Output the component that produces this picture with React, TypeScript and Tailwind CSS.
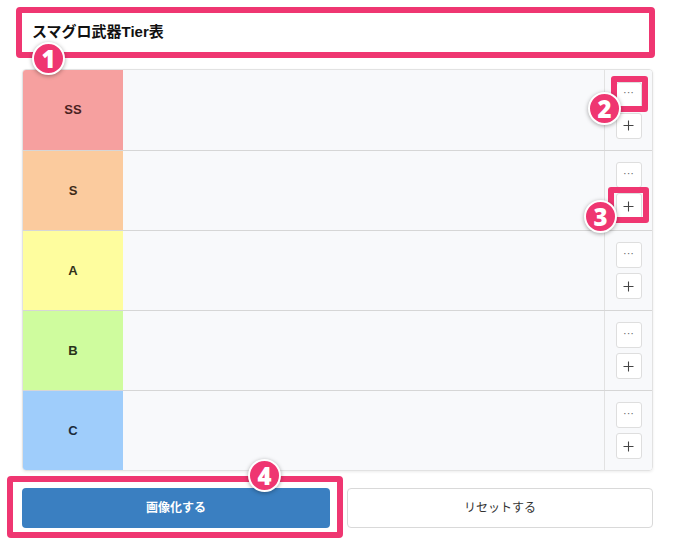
import React from "react";

const tiers = [
  { label: "SS", bg: "bg-[#f6a09f]", text: "text-[#4a2222]" },
  { label: "S", bg: "bg-[#fbcb9e]", text: "text-[#3e2a18]" },
  { label: "A", bg: "bg-[#fefd9e]", text: "text-[#33331a]" },
  { label: "B", bg: "bg-[#cffc9e]", text: "text-[#28331a]" },
  { label: "C", bg: "bg-[#9fcdfb]", text: "text-[#1a2a3a]" },
];

function Badge({ n, className }: { n: string; className: string }) {
  return (
    <div
      className={
        "absolute w-[33px] h-[33px] rounded-full bg-[#ef3671] border-[2.5px] border-white shadow-[0_1px_4px_rgba(0,0,0,0.35)] flex items-center justify-center text-white text-[24px] font-black leading-none " +
        className
      }
      style={{ fontFamily: '"Open Sans", "Liberation Sans", sans-serif' }}
    >
      {n}
    </div>
  );
}

export default function App() {
  return (
    <div
      className="relative w-[678px] h-[541px] bg-white overflow-hidden"
      style={{ fontFamily: '"Liberation Sans", "Noto Sans CJK JP", sans-serif' }}
    >
      <div className="pl-[22px] pr-[25px] pt-[13px]">
        <div className="h-[39px] bg-white flex items-center pl-[10px]">
          <span className="text-[15px] font-bold text-[#111]">スマグロ武器Tier表</span>
        </div>

        <div className="mt-[17px] border border-[#e2e2e2] rounded-[4px] overflow-hidden shadow-[0_1px_3px_rgba(0,0,0,0.08)]">
          {tiers.map((t, i) => (
            <div
              key={t.label}
              className={"flex h-[80px] " + (i > 0 ? "border-t border-[#d6d6d6]" : "")}
            >
              <div
                className={
                  "w-[100px] flex items-center justify-center text-[13px] font-bold " +
                  t.bg +
                  " " +
                  t.text
                }
              >
                {t.label}
              </div>
              <div className="flex-1 bg-[#f8f9fb]" />
              <div className="w-[48px] bg-[#f8f9fb] border-l border-[#e2e2e2] flex flex-col items-center justify-center gap-[5px]">
                <div className="w-[26px] h-[26px] bg-white border border-[#dedede] rounded-[3px] flex items-center justify-center text-[#666] text-[11px] leading-none pb-[4px]">
                  ···
                </div>
                <div className="w-[26px] h-[26px] bg-white border border-[#dedede] rounded-[3px] flex items-center justify-center">
                  <svg width="11" height="11" viewBox="0 0 11 11">
                    <path d="M5.5 0.5V10.5M0.5 5.5H10.5" stroke="#444" strokeWidth="1.1" />
                  </svg>
                </div>
              </div>
            </div>
          ))}
        </div>

        <div className="mt-[17px] flex gap-[17px]">
          <div className="w-[308px] h-[40px] rounded-[4px] bg-[#3a7fc1] flex items-center justify-center text-white text-[12px] font-bold">
            画像化する
          </div>
          <div className="flex-1 h-[40px] rounded-[4px] bg-white border border-[#d9d9d9] flex items-center justify-center text-[#333] text-[12px]">
            リセットする
          </div>
        </div>
      </div>

      {/* highlight boxes */}
      <div className="absolute left-[16px] top-[7px] w-[639px] h-[51px] border-[6px] border-[#ef3671] rounded-[4px]" />
      <div className="absolute left-[611px] top-[76px] w-[37px] h-[36px] border-[6px] border-[#ef3671] rounded-[3px]" />
      <div className="absolute left-[608px] top-[187px] w-[41px] h-[36px] border-[6px] border-[#ef3671] rounded-[3px]" />
      <div className="absolute left-[7px] top-[476px] w-[336px] h-[62px] border-[6px] border-[#ef3671] rounded-[4px]" />

      <Badge n="1" className="left-[32px] top-[42px]" />
      <Badge n="2" className="left-[588px] top-[92px]" />
      <Badge n="3" className="left-[584px] top-[200px]" />
      <Badge n="4" className="left-[248px] top-[459px]" />
    </div>
  );
}
